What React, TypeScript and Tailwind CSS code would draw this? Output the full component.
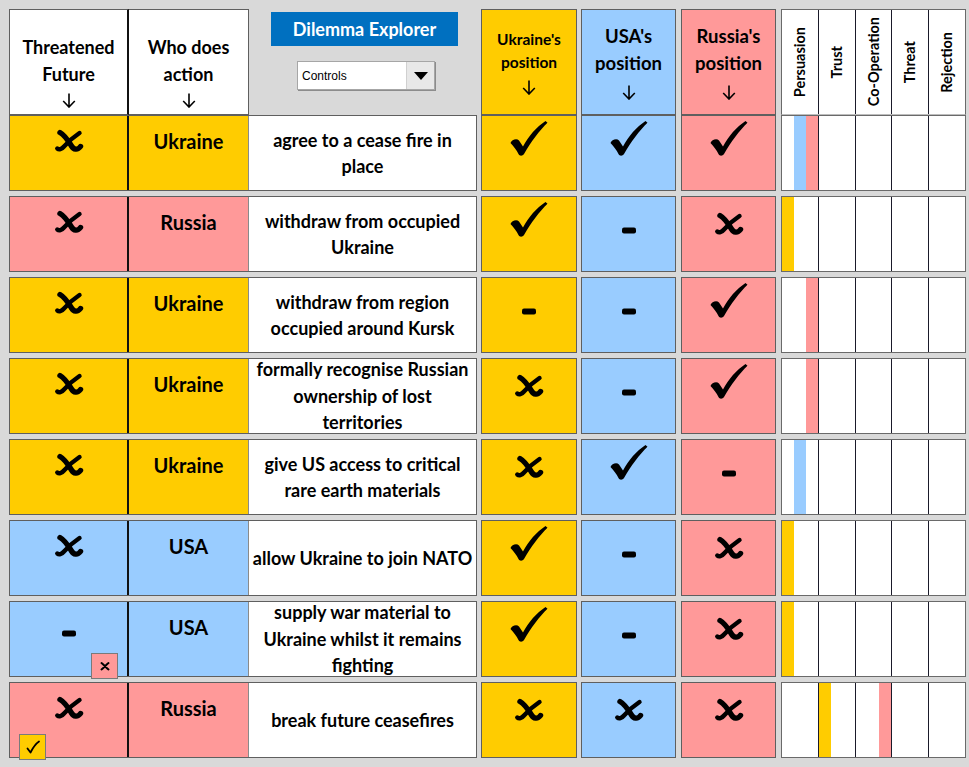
import React from 'react';

type Mark = 'check' | 'cross' | 'dash';
type Tone = 'y' | 'b' | 'p';

const fill: Record<Tone, string> = {
  y: 'bg-[#ffcc00]',
  b: 'bg-[#99ccff]',
  p: 'bg-[#ff9999]',
};

const slotFill = ['bg-[#ffcc00]', 'bg-[#99ccff]', 'bg-[#ff9999]'];

interface Row {
  threat: Mark;
  threatTone: Tone;
  badge?: { tone: Tone; mark: 'x' | 'tick'; side: 'left' | 'right' };
  who: string;
  whoTone: Tone;
  action: string[];
  ukr: Mark;
  usa: Mark;
  rus: Mark;
  bars: number[][];
}

const rows: Row[] = [
  {
    threat: 'cross', threatTone: 'y', who: 'Ukraine', whoTone: 'y',
    action: ['agree to a cease fire in', 'place'],
    ukr: 'check', usa: 'check', rus: 'check',
    bars: [[1, 2], [], [], [], []],
  },
  {
    threat: 'cross', threatTone: 'p', who: 'Russia', whoTone: 'p',
    action: ['withdraw from occupied', 'Ukraine'],
    ukr: 'check', usa: 'dash', rus: 'cross',
    bars: [[0], [], [], [], []],
  },
  {
    threat: 'cross', threatTone: 'y', who: 'Ukraine', whoTone: 'y',
    action: ['withdraw from region', 'occupied around Kursk'],
    ukr: 'dash', usa: 'dash', rus: 'check',
    bars: [[2], [], [], [], []],
  },
  {
    threat: 'cross', threatTone: 'y', who: 'Ukraine', whoTone: 'y',
    action: ['formally recognise Russian', 'ownership of lost', 'territories'],
    ukr: 'cross', usa: 'dash', rus: 'check',
    bars: [[2], [], [], [], []],
  },
  {
    threat: 'cross', threatTone: 'y', who: 'Ukraine', whoTone: 'y',
    action: ['give US access to critical', 'rare earth materials'],
    ukr: 'cross', usa: 'check', rus: 'dash',
    bars: [[1], [], [], [], []],
  },
  {
    threat: 'cross', threatTone: 'b', who: 'USA', whoTone: 'b',
    action: ['allow Ukraine to join NATO'],
    ukr: 'check', usa: 'dash', rus: 'cross',
    bars: [[0], [], [], [], []],
  },
  {
    threat: 'dash', threatTone: 'b', who: 'USA', whoTone: 'b',
    badge: { tone: 'p', mark: 'x', side: 'right' },
    action: ['supply war material to', 'Ukraine whilst it remains', 'fighting'],
    ukr: 'check', usa: 'dash', rus: 'cross',
    bars: [[0], [], [], [], []],
  },
  {
    threat: 'cross', threatTone: 'p', who: 'Russia', whoTone: 'p',
    badge: { tone: 'y', mark: 'tick', side: 'left' },
    action: ['break future ceasefires'],
    ukr: 'cross', usa: 'cross', rus: 'cross',
    bars: [[], [0], [2], [], []],
  },
];

const measures = ['Persuasion', 'Trust', 'Co-Operation', 'Threat', 'Rejection'];

function Glyph({ mark }: { mark: Mark }) {
  return (
    <svg width="40" height="40" viewBox="0 0 40 40" className="block">
      {mark === 'check' && (
        <path
          transform="translate(1.5 2)"
          d="M0 22 C1 19 6 17 8.5 19.5 L12.5 25.5 C18 15 26 6 35 0 L37 1.8 C29 9.5 20.5 21 13.5 33 C12 35.2 9 35.2 8 33 C6 29 3 25 0 22 Z"
          fill="#000"
        />
      )}
      {mark === 'cross' && (
        <g transform="translate(6.5 12)" fill="none" stroke="#000" strokeLinecap="round">
          <path d="M4.5 3.5 C9 6 13 12 16 17 C18 20.5 22 21.5 25 17.5" strokeWidth="5.4" />
          <path d="M24 4 C18 8 12.5 13 8.5 17.5 C6 20.5 3.5 21 1.8 19.5" strokeWidth="4.4" />
        </g>
      )}
      {mark === 'dash' && <rect x="13" y="27.5" width="14" height="6" rx="2" fill="#000" />}
    </svg>
  );
}

function Arrow({ h }: { h: string }) {
  return (
    <div className={`${h} flex items-center justify-center`}>
      <svg width="14" height="15" viewBox="0 0 14 15">
        <path d="M7 0.5 V14 M1.2 8 L7 14 L12.8 8" fill="none" stroke="#000" strokeWidth="1.6" />
      </svg>
    </div>
  );
}

function MarkCell({ mark, tone, w }: { mark: Mark; tone: Tone; w: string }) {
  return (
    <div className={`${w} ${fill[tone]} border border-[#5f5f5f] flex flex-col items-center`}>
      <div className="mt-[3px]">
        <Glyph mark={mark} />
      </div>
    </div>
  );
}

function Badge({ tone, mark, side }: { tone: Tone; mark: 'x' | 'tick'; side: 'left' | 'right' }) {
  const pos = side === 'right' ? 'right-[9px]' : 'left-[9px]';
  return (
    <div
      className={`absolute ${pos} bottom-[-3px] w-[27px] h-[26px] ${fill[tone]} border border-[#7a7a7a] flex items-center justify-center`}
    >
      {mark === 'x' ? (
        <svg width="12" height="12" viewBox="0 0 12 12">
          <path d="M2.5 3 C5 5 7 7.5 9.5 9.5 M9.5 3 C7 5 5 7.5 2.5 9.5" fill="none" stroke="#000" strokeWidth="2" strokeLinecap="round" />
        </svg>
      ) : (
        <svg width="16" height="16" viewBox="0 0 16 16">
          <path d="M2.5 9.5 L5.5 13.5 C8 8.5 10.5 5 14 2.5" fill="none" stroke="#000" strokeWidth="1.8" strokeLinecap="round" strokeLinejoin="round" />
        </svg>
      )}
    </div>
  );
}

function Bars({ bars }: { bars: number[][] }) {
  return (
    <div className="w-[185px] bg-white border border-[#6a6a6a] flex">
      {bars.map((filled, i) => (
        <div key={i} className={`flex-1 flex ${i > 0 ? 'border-l border-[#1a1a2a]' : ''}`}>
          {[0, 1, 2].map((s) => (
            <div key={s} className={`flex-1 ${filled.includes(s) ? slotFill[s] : ''}`} />
          ))}
        </div>
      ))}
    </div>
  );
}

function TableRow({ row }: { row: Row }) {
  return (
    <div className="flex h-[76px]">
      <div className="w-[468px] flex border border-[#5f5f5f] bg-white">
        <div className={`relative w-[119px] ${fill[row.threatTone]} border-r-2 border-[#111] flex flex-col items-center`}>
          <div className="mt-[1px]">
            <Glyph mark={row.threat} />
          </div>
          {row.badge && <Badge {...row.badge} />}
        </div>
        <div className={`w-[120px] ${fill[row.whoTone]} border-r border-[#8a8a8a] pt-[12px] text-center text-[20px] leading-[26px] font-bold`}>
          {row.who}
        </div>
        <div className="flex-1 flex items-center justify-center text-center text-[18px] leading-[26.5px] font-bold">
          <div>
            {row.action.map((l, i) => (
              <div key={i}>{l}</div>
            ))}
          </div>
        </div>
      </div>
      <div className="w-[4px]" />
      <MarkCell mark={row.ukr} tone="y" w="w-[96px]" />
      <div className="w-[4px]" />
      <MarkCell mark={row.usa} tone="b" w="w-[95px]" />
      <div className="w-[5px]" />
      <MarkCell mark={row.rus} tone="p" w="w-[95px]" />
      <div className="w-[5px]" />
      <Bars bars={row.bars} />
    </div>
  );
}

function Header() {
  return (
    <div className="flex h-[106px]">
      <div className="w-[468px] flex">
        <div className="w-[120px] bg-white border border-r-2 border-[#5f5f5f] border-r-[#111] flex flex-col items-center pt-[24px] text-[18px] leading-[26.5px] font-bold">
          <div>Threatened</div>
          <div>Future</div>
          <Arrow h="h-[28px]" />
        </div>
        <div className="w-[120px] bg-white border border-l-0 border-[#5f5f5f] flex flex-col items-center pt-[24px] text-[18px] leading-[26.5px] font-bold">
          <div>Who does</div>
          <div>action</div>
          <Arrow h="h-[28px]" />
        </div>
        <div className="flex-1 flex flex-col items-start pl-[22px] pt-[3px]">
          <div className="w-[187px] h-[34px] bg-[#0070c0] text-white text-[18px] font-bold flex items-center justify-center">
            Dilemma Explorer
          </div>
          <div className="mt-[15px] ml-[26px] w-[138px] h-[29px] bg-white border border-[#a6a6a6] shadow-[1px_1px_0_#8c8c8c] flex">
            <div className="flex-1 pl-[4px] flex items-center text-[12px] font-['Liberation_Sans',sans-serif]">Controls</div>
            <div className="w-[28px] bg-[#e8e8e8] border-l border-[#d0d0d0] flex items-center justify-center">
              <svg width="14" height="8" viewBox="0 0 14 8">
                <path d="M0 0 H14 L7 8 Z" fill="#000" />
              </svg>
            </div>
          </div>
        </div>
      </div>
      <div className="w-[4px]" />
      <div className="w-[96px] bg-[#ffcc00] border border-[#5f5f5f] flex flex-col items-center justify-center text-[15.5px] leading-[23px] font-bold pt-[4px]">
        <div>Ukraine's</div>
        <div>position</div>
        <Arrow h="h-[26px]" />
      </div>
      <div className="w-[4px]" />
      <div className="w-[95px] bg-[#99ccff] border border-[#5f5f5f] flex flex-col items-center justify-center text-[18.5px] leading-[27px] font-bold pt-[6px]">
        <div>USA's</div>
        <div>position</div>
        <Arrow h="h-[30px]" />
      </div>
      <div className="w-[5px]" />
      <div className="w-[95px] bg-[#ff9999] border border-[#5f5f5f] flex flex-col items-center justify-center text-[18.5px] leading-[27px] font-bold pt-[6px]">
        <div>Russia's</div>
        <div>position</div>
        <Arrow h="h-[30px]" />
      </div>
      <div className="w-[5px]" />
      <div className="w-[185px] bg-white border border-[#6a6a6a] border-b-[#bdbdbd] flex">
        {measures.map((m, i) => (
          <div key={m} className={`flex-1 flex items-center justify-center ${i > 0 ? 'border-l border-[#1a1a2a]' : ''}`}>
            <span className="[writing-mode:vertical-rl] rotate-180 text-[14.5px] font-bold whitespace-nowrap">{m}</span>
          </div>
        ))}
      </div>
    </div>
  );
}

export default function App() {
  return (
    <div className="w-[969px] h-[767px] overflow-hidden bg-[#d9d9d9] pl-[9px] pt-[9px] font-['Lato','DejaVu_Sans',sans-serif] text-black">
      <Header />
      <TableRow row={rows[0]} />
      <div className="flex flex-col gap-[5px] mt-[5px]">
        {rows.slice(1).map((r, i) => (
          <TableRow key={i} row={r} />
        ))}
      </div>
    </div>
  );
}
